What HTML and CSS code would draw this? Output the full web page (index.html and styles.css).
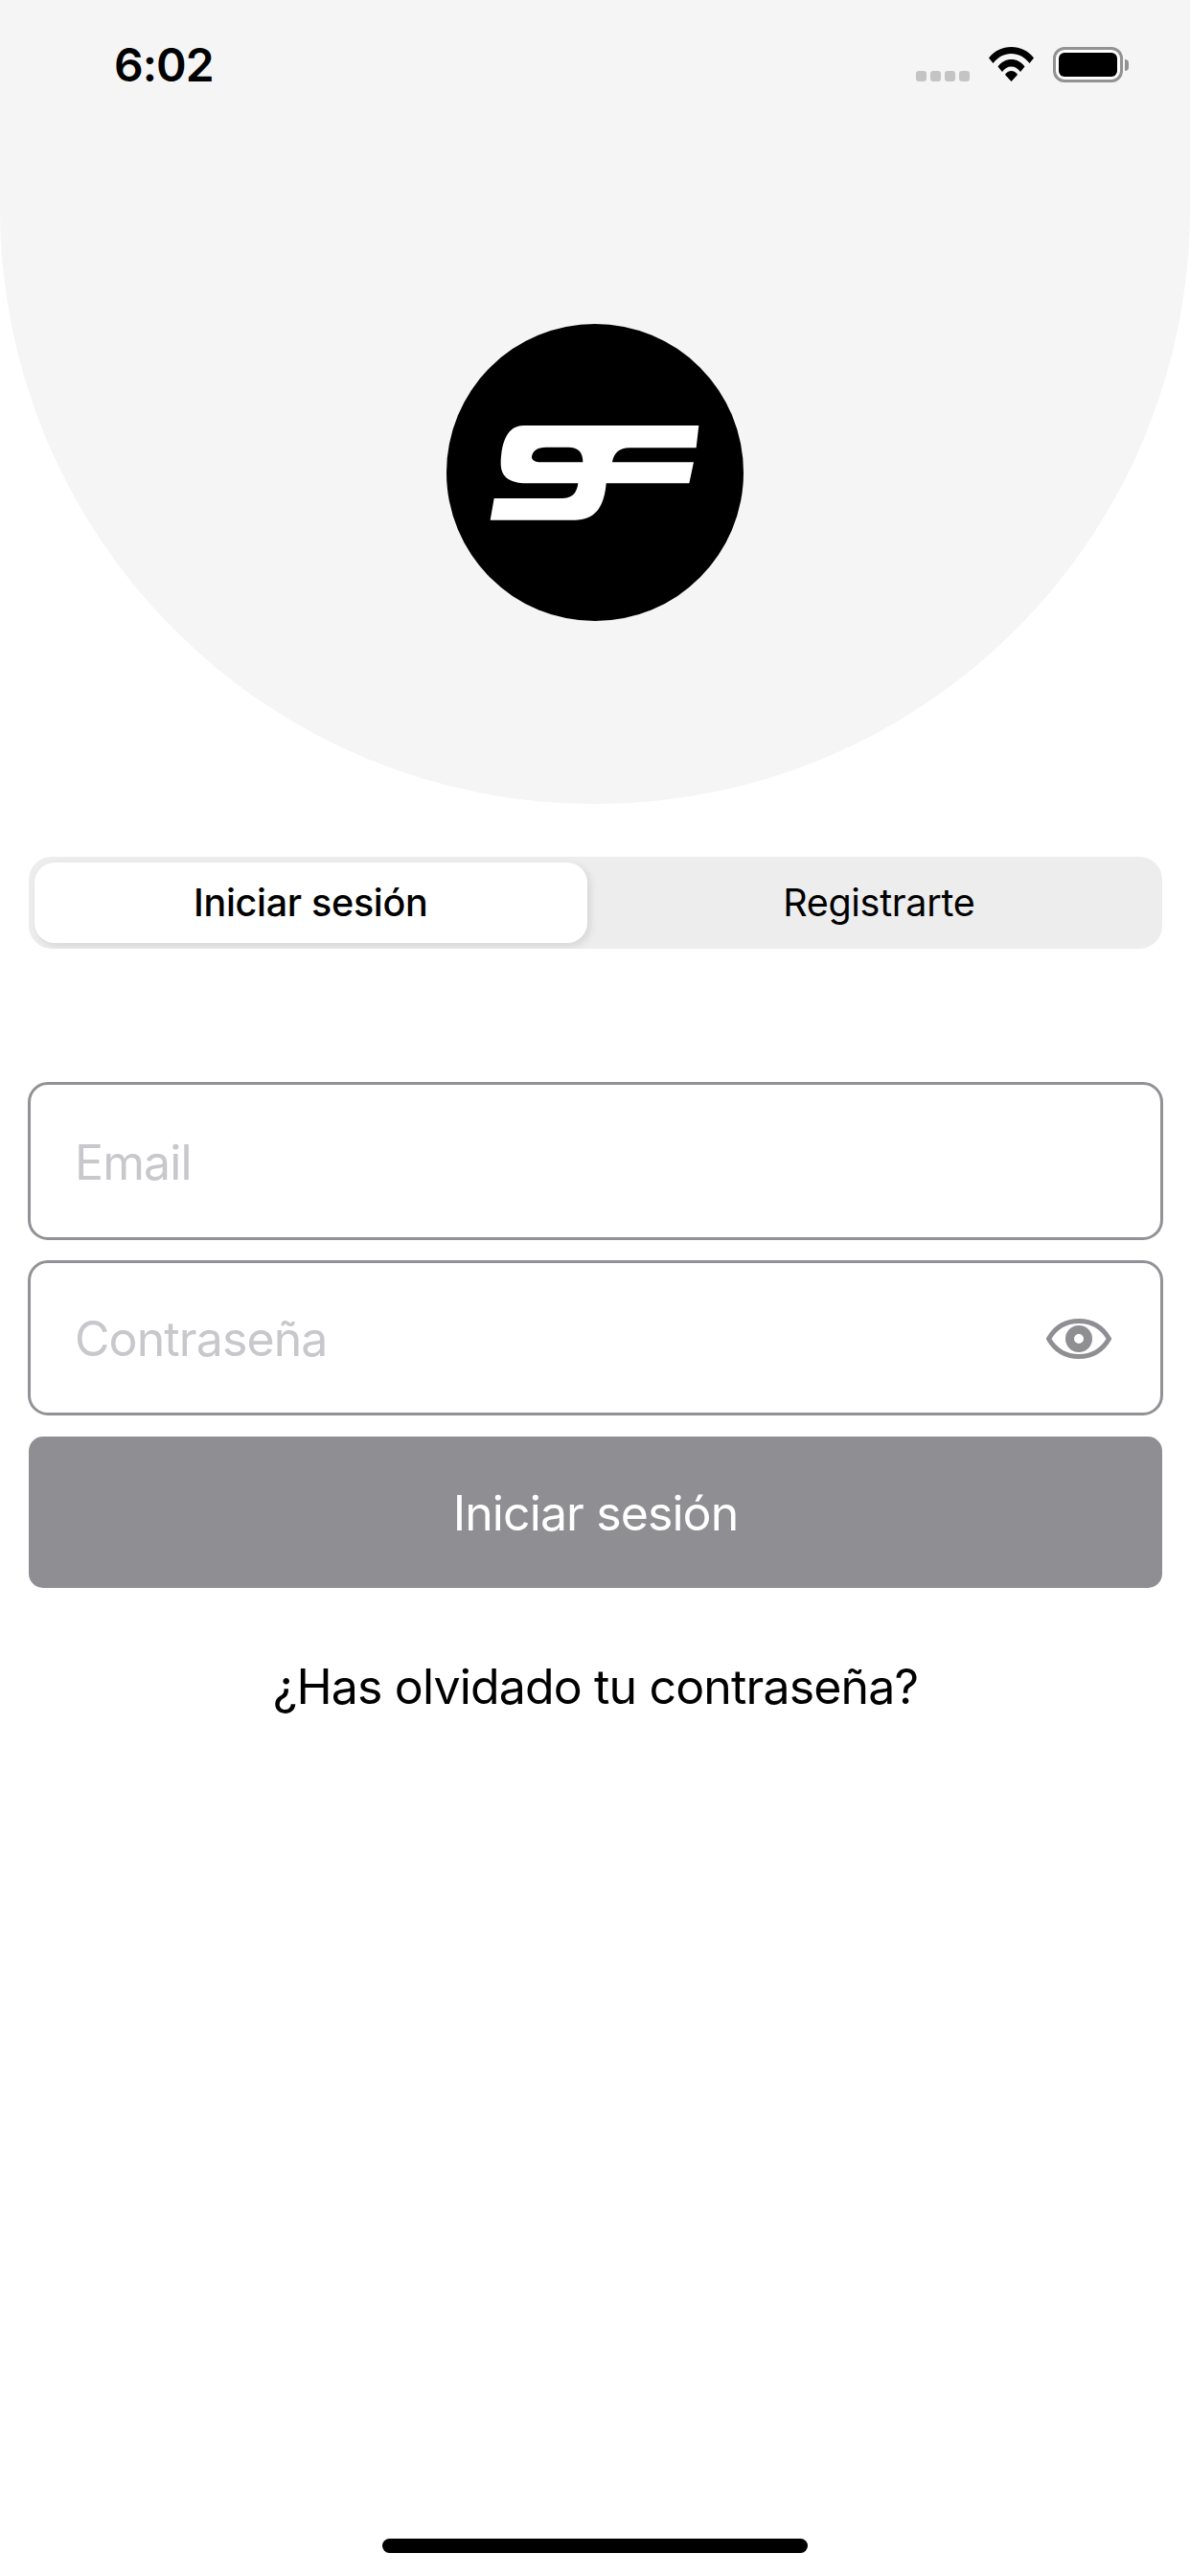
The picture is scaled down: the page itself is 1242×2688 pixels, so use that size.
FILE: index.html
```html
<!DOCTYPE html>
<html lang="es">
<head>
    <meta charset="UTF-8">
    <meta name="viewport" content="width=device-width, initial-scale=1.0">
    <title>Iniciar sesión</title>
    <link rel="stylesheet" href="styles.css">
</head>
<body>
    <div class="hero">
        <div class="status-bar">
            <span class="time">6:02</span>
            <div class="status-icons">
                <div class="signal">
                    <span class="dot"></span>
                    <span class="dot"></span>
                    <span class="dot"></span>
                    <span class="dot"></span>
                </div>
                <svg class="wifi" viewBox="0 0 47 36">
                    <path d="M0 11.5C6 4 14 0 23.5 0S41 4 47 11.5L42.5 17C37.5 10.5 31 7 23.5 7S9.500 10.500 4.500 17Z"/>
                    <path d="M9.500 20.500C13 15.500 18 13 23.500 13S34 15.500 37.500 20.500L33 26C30.500 22.500 27.500 20.500 23.500 20.500S16.500 22.500 14 26Z"/>
                    <path d="M17 29C18.500 26.500 21 25 23.500 25S28.500 26.500 30 29L23.500 36Z"/>
                </svg>
                <div class="battery">
                    <div class="battery-body">
                        <div class="battery-fill"></div>
                    </div>
                    <div class="battery-nub"></div>
                </div>
            </div>
        </div>

        <div class="logo">
            <svg viewBox="78 54 930 930">
                <path fill-rule="evenodd" d="M320 372H868L860 442H650C620 442 602 458 597 487H852L838 553H578C572 625 545 668 480 668H215L227 600H440C470 600 486 585 490 553H330C270 553 248 530 248 490C250 420 270 372 320 372ZM345 470C345 480 355 487 375 487H505C505 455 490 440 460 440H390C362 440 347 452 345 470Z"/>
            </svg>
        </div>
    </div>

    <div class="content">
        <div class="segmented">
            <div class="tab tab-active">Iniciar sesión</div>
            <div class="tab">Registrarte</div>
        </div>

        <div class="form">
            <div class="field field-email">
                <span class="placeholder">Email</span>
            </div>
            <div class="field field-password">
                <span class="placeholder">Contraseña</span>
                <svg class="eye" viewBox="0 0 68 42">
                    <path class="eye-outline" d="M2.500 21C10 8 21 2.500 34 2.500S58 8 65.500 21C58 34 47 39.500 34 39.500S10 34 2.500 21Z"/>
                    <circle class="eye-pupil" cx="34" cy="21" r="9.500"/>
                </svg>
            </div>
            <button class="submit-button">Iniciar sesión</button>
        </div>

        <a class="forgot-link">¿Has olvidado tu contraseña?</a>
    </div>

    <div class="home-indicator"></div>
</body>
</html>
```

FILE: styles.css
```css
* {
    margin: 0;
    padding: 0;
    box-sizing: border-box;
}

body {
    font-family: Inter, 'Liberation Sans', sans-serif;
    background: #ffffff;
    color: #000000;
    width: 1242px;
    height: 2688px;
    display: flex;
    flex-direction: column;
    overflow: hidden;
}

.hero {
    background: #f5f5f5;
    height: 839px;
    border-radius: 0 0 621px 621px;
    display: flex;
    flex-direction: column;
    align-items: center;
}

.status-bar {
    width: 100%;
    height: 135px;
    padding: 0 64px 0 119px;
    display: flex;
    justify-content: space-between;
    align-items: center;
}

.time {
    font-size: 48px;
    font-weight: 600;
    letter-spacing: -1px;
}

.status-icons {
    display: flex;
    align-items: flex-end;
    height: 37px;
}

.signal {
    display: flex;
    gap: 4px;
    margin-right: 20px;
    margin-bottom: 1px;
}

.dot {
    width: 11px;
    height: 11px;
    border-radius: 3px;
    background: #c4c4c4;
}

.wifi {
    width: 47px;
    height: 36px;
    margin-right: 20px;
    margin-bottom: 1px;
}

.battery {
    display: flex;
    align-items: center;
}

.battery-body {
    width: 73px;
    height: 37px;
    border: 3px solid #929292;
    border-radius: 12px;
    padding: 3px;
    background: #ffffff;
}

.battery-fill {
    width: 100%;
    height: 100%;
    background: #000000;
    border-radius: 6px;
}

.battery-nub {
    width: 4px;
    height: 12px;
    margin-left: 2px;
    background: #929292;
    border-radius: 0 4px 4px 0;
}

.logo {
    width: 310px;
    height: 310px;
    margin-top: 203px;
    background: #000000;
    border-radius: 50%;
}

.logo svg {
    display: block;
    width: 100%;
    height: 100%;
    fill: #ffffff;
}

.content {
    padding: 55px 28px 0 29px;
    display: flex;
    flex-direction: column;
}

.segmented {
    margin: 0 1px;
    height: 96px;
    background: #ededed;
    border-radius: 24px;
    display: grid;
    grid-template-columns: 1fr 1fr;
    overflow: hidden;
}

.tab {
    display: flex;
    justify-content: center;
    align-items: center;
    font-size: 39.5px;
    font-weight: 400;
    letter-spacing: -0.3px;
}

.tab-active {
    margin: 6px 9px 6px 6px;
    background: #ffffff;
    border-radius: 21px;
    font-weight: 500;
    box-shadow: 3px 3px 9px rgba(0, 0, 0, 0.1);
}

.form {
    margin-top: 139px;
    display: flex;
    flex-direction: column;
}

.field {
    border: 3px solid #929296;
    border-radius: 21px;
    padding: 2px 46px 0;
    display: flex;
    justify-content: space-between;
    align-items: center;
    font-size: 50px;
}

.field-email {
    height: 165px;
    margin-bottom: 21px;
}

.field-password {
    height: 162px;
    padding-right: 51px;
    margin-bottom: 22px;
}

.placeholder {
    color: #c7c7cc;
    letter-spacing: -0.9px;
}

.eye {
    width: 68px;
    height: 42px;
}

.eye-outline {
    fill: none;
    stroke: #8e8e93;
    stroke-width: 5;
}

.eye-pupil {
    fill: #ffffff;
    stroke: #8e8e93;
    stroke-width: 9;
}

.submit-button {
    margin: 0 1px;
    height: 158px;
    padding-top: 2px;
    background: #8e8e93;
    border: none;
    border-radius: 15px;
    color: #ffffff;
    font-family: inherit;
    font-size: 50px;
    letter-spacing: -0.9px;
}

.forgot-link {
    margin-top: 73px;
    text-align: center;
    font-size: 50px;
    line-height: 60px;
    letter-spacing: -0.85px;
}

.home-indicator {
    width: 444px;
    height: 15px;
    margin: auto auto 24px;
    background: #000000;
    border-radius: 8px;
}
```
